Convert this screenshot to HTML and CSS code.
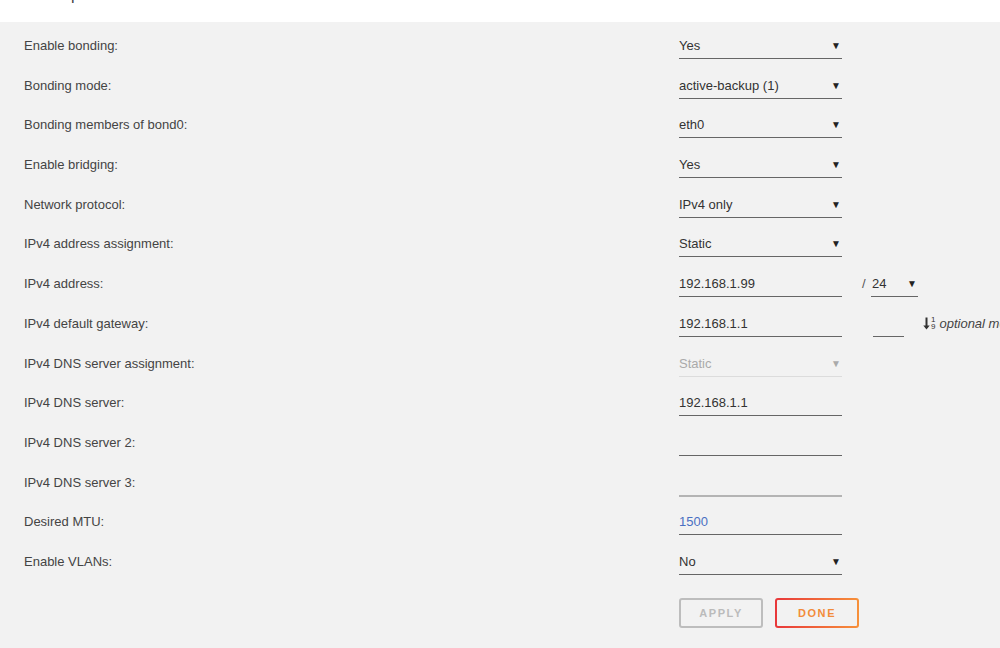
FILE: index.html
```html
<!DOCTYPE html>
<html lang="en">

<head>
    <meta charset="UTF-8">
    <meta name="viewport" content="width=device-width, initial-scale=1.0">
    <title>Network Setup</title>
    <link rel="stylesheet" href="styles.css">
</head>

<body>
    <header class="topbar">
        <span class="topbar-title">Setup</span>
    </header>

    <main class="panel">
        <form class="netform">
            <div class="row">
                <label class="lbl">Enable bonding:</label>
                <div class="ctl sel">Yes<span class="arr">&#9660;</span></div>
            </div>
            <div class="row">
                <label class="lbl">Bonding mode:</label>
                <div class="ctl sel">active-backup (1)<span class="arr">&#9660;</span></div>
            </div>
            <div class="row">
                <label class="lbl">Bonding members of bond0:</label>
                <div class="ctl sel">eth0<span class="arr">&#9660;</span></div>
            </div>
            <div class="row">
                <label class="lbl">Enable bridging:</label>
                <div class="ctl sel">Yes<span class="arr">&#9660;</span></div>
            </div>
            <div class="row">
                <label class="lbl">Network protocol:</label>
                <div class="ctl sel">IPv4 only<span class="arr">&#9660;</span></div>
            </div>
            <div class="row">
                <label class="lbl">IPv4 address assignment:</label>
                <div class="ctl sel">Static<span class="arr">&#9660;</span></div>
            </div>
            <div class="row">
                <label class="lbl">IPv4 address:</label>
                <div class="ctl">192.168.1.99</div>
                <div class="extra">
                    <span class="slash">/</span>
                    <div class="ctl sel prefix">24<span class="arr">&#9660;</span></div>
                </div>
            </div>
            <div class="row">
                <label class="lbl">IPv4 default gateway:</label>
                <div class="ctl">192.168.1.1</div>
                <div class="extra">
                    <div class="ctl metric"></div>
                    <span class="hint">
                        <span class="sorticon">
                            <svg width="7" height="13" viewBox="0 0 7 13">
                                <path d="M3.5 0.5 V11" stroke="#333" stroke-width="2"/>
                                <path d="M0.3 8.5 L3.5 12.5 L6.7 8.5 Z" fill="#333"/>
                            </svg>
                            <span class="nums"><span>1</span><span>9</span></span>
                        </span>optional metric</span>
                </div>
            </div>
            <div class="row">
                <label class="lbl">IPv4 DNS server assignment:</label>
                <div class="ctl sel off">Static<span class="arr">&#9660;</span></div>
            </div>
            <div class="row">
                <label class="lbl">IPv4 DNS server:</label>
                <div class="ctl">192.168.1.1</div>
            </div>
            <div class="row">
                <label class="lbl">IPv4 DNS server 2:</label>
                <div class="ctl"></div>
            </div>
            <div class="row">
                <label class="lbl">IPv4 DNS server 3:</label>
                <div class="ctl soft"></div>
            </div>
            <div class="row">
                <label class="lbl">Desired MTU:</label>
                <div class="ctl ph">1500</div>
            </div>
            <div class="row">
                <label class="lbl">Enable VLANs:</label>
                <div class="ctl sel">No<span class="arr">&#9660;</span></div>
            </div>

            <div class="actions">
                <button type="button" class="btn btn-apply">Apply</button>
                <button type="button" class="btn btn-done">Done</button>
            </div>
        </form>
    </main>
</body>

</html>
```

FILE: styles.css
```css
* {
    margin: 0;
    padding: 0;
    box-sizing: border-box;
}

body {
    font-family: 'Liberation Sans', Arial, sans-serif;
    font-size: 13px;
    color: #333;
    background: #f2f2f2;
    width: 1000px;
    height: 648px;
    overflow: hidden;
}

.topbar {
    height: 22px;
    background: #ffffff;
    overflow: hidden;
}

.topbar-title {
    display: block;
    margin-top: -14px;
    padding-left: 38px;
    font-size: 16px;
    color: #444;
}

.panel {
    padding: 10px 0 0 24px;
}

.row {
    display: grid;
    grid-template-columns: 655px 163px 1fr;
    height: 39.7px;
    align-items: start;
}

.lbl {
    line-height: 27px;
    color: #444;
}

.ctl {
    position: relative;
    height: 27px;
    line-height: 27px;
    border-bottom: 1px solid #666;
    color: #333;
    white-space: nowrap;
}

.arr {
    position: absolute;
    right: 1px;
    top: 0;
    font-size: 10px;
    color: #222;
}

.off {
    color: #aaa;
    border-bottom-color: #dcdcdc;
}

.off .arr {
    color: #aaa;
}

.soft {
    border-bottom: 2px solid #b4b4b4;
    height: 28px;
}

.ph {
    color: #4a70c2;
}

.extra {
    display: flex;
    align-items: flex-start;
    padding-left: 20px;
    white-space: nowrap;
}

.slash {
    line-height: 27px;
    color: #555;
    width: 9px;
}

.prefix {
    width: 47px;
    padding-left: 1px;
}

.metric {
    width: 31px;
    margin-left: 11px;
}

.hint {
    display: flex;
    align-items: center;
    height: 27px;
    margin-left: 19px;
    font-style: italic;
    color: #444;
}

.sorticon {
    display: flex;
    align-items: center;
    gap: 1px;
    font-style: normal;
    margin-right: 4px;
}

.nums {
    display: flex;
    flex-direction: column;
    font-size: 8px;
    line-height: 7px;
    color: #333;
}

.actions {
    display: flex;
    gap: 12px;
    margin: 10px 0 0 655px;
}

.btn {
    width: 84px;
    height: 30px;
    border-radius: 3px;
    background: transparent;
    font-family: 'Liberation Sans', Arial, sans-serif;
    font-size: 11px;
    font-weight: bold;
    letter-spacing: 1.6px;
    text-transform: uppercase;
}

.btn-apply {
    border: 2px solid #bdbdbd;
    color: #bbb;
}

.btn-done {
    border: 2px solid transparent;
    background: linear-gradient(#f2f2f2, #f2f2f2) padding-box,
        linear-gradient(90deg, #e8373a, #f7913a) border-box;
    color: #f28c3a;
}
```
